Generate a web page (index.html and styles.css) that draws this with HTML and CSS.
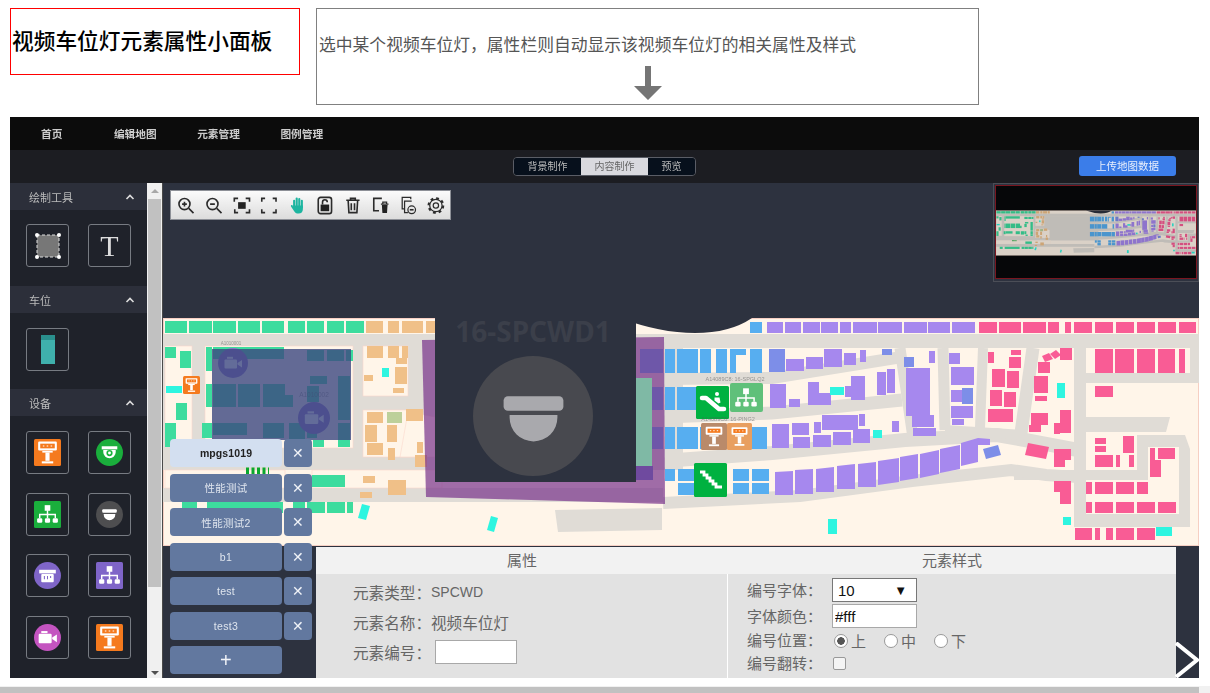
FILE: index.html
```
<!DOCTYPE html>
<html lang="zh-CN">
<head>
<meta charset="utf-8">
<title>视频车位灯元素属性小面板</title>
<link rel="stylesheet" href="styles.css">
</head>
<body>
<svg class="defs" width="0" height="0" aria-hidden="true">
  <defs>
    <symbol id="kiosk" viewBox="0 0 26 26">
      <rect x="4" y="2.5" width="18" height="8.5" rx="1" fill="#fff"/>
      <rect x="6" y="4.5" width="14" height="4.5" fill="#f57a1e"/>
      <path d="M8.5 6.7h1.5M12.2 6.7h1.5M16 6.7h1.5" stroke="#fff" stroke-width="1"/>
      <rect x="8" y="11.5" width="10" height="1.6" fill="#fff"/>
      <rect x="11" y="13" width="4" height="8" fill="#fff"/>
      <rect x="7.5" y="21.5" width="11" height="2" fill="#fff"/>
    </symbol>
    <symbol id="tree" viewBox="0 0 26 26">
      <rect x="10.3" y="4" width="5.4" height="5.4" fill="#fff"/>
      <path d="M13 9v4M5.5 16.5V13h15v3.5M13 13v3.5" stroke="#fff" stroke-width="1.4" fill="none"/>
      <rect x="3" y="16.5" width="5" height="4.5" rx="1.2" fill="#fff"/>
      <rect x="10.5" y="16.5" width="5" height="4.5" rx="1.2" fill="#fff"/>
      <rect x="18" y="16.5" width="5" height="4.5" rx="1.2" fill="#fff"/>
    </symbol>
    <symbol id="dome" viewBox="0 0 26 26">
      <rect x="6" y="8" width="14" height="3.4" rx="1" fill="currentColor"/>
      <path d="M7.4 12.4h11.2v.6a5.6 5.6 0 0 1-11.2 0z" fill="currentColor"/>
    </symbol>
    <symbol id="video" viewBox="0 0 26 26">
      <rect x="4.5" y="9.5" width="12.5" height="9" rx="1" fill="#fff"/>
      <rect x="7" y="6.8" width="6" height="2" fill="#fff"/>
      <path d="M17.5 13l4.5-3v7.500l-4.500-3z" fill="#fff"/>
    </symbol>
    <g id="mapart">
      <rect x="163" y="318" width="1036" height="228" fill="#fff5e9"/>
      <rect x="163.500" y="318.500" width="1035" height="227" fill="none" stroke="#f6cfc3"/>
      <g fill="#e0dcd6">
        <rect x="163" y="334" width="1036" height="14"/>
        <rect x="163" y="346" width="520" height="124"/>
        <rect x="163" y="488" width="500" height="14"/>
        <rect x="1190" y="348" width="9" height="35"/>
        <rect x="1085" y="373" width="114" height="10"/>
        <rect x="1074" y="348" width="12" height="179"/>
        <path d="M1086 417h84l-4 15h-80z"/>
        <path d="M1137 435h48l5 14v78h-116v-13h105v-67h-31v33h-134v-10h123z"/>
        <path d="M555 510l107-2v22l-104 2z"/>
      </g>
      <g fill="none" stroke="#e0dcd6">
        <path d="M663 379L772 378L902 357" stroke-width="12"/>
        <path d="M663 417L772 413L902 400" stroke-width="13"/>
        <path d="M663 461L772 453L905 440L997 435L1025 440L1078 450" stroke-width="14"/>
        <path d="M663 503L800 496L912 481L1011 470L1046 475L1078 477" stroke-width="12"/>
        <path d="M900 348L913 438" stroke-width="11"/>
        <path d="M943 348L945 430" stroke-width="11"/>
        <path d="M983 348L980 428" stroke-width="10"/>
        <path d="M1033 348L1021 433" stroke-width="13"/>
        <path d="M945 430L1025 435" stroke-width="10"/>
      </g>
      <g fill="#fff5e9" stroke="#fbd8cc" stroke-width=".6">
        <rect x="165" y="346" width="27" height="100"/>
        <rect x="205" y="346" width="148" height="102"/>
        <rect x="363" y="346" width="45" height="50"/>
        <rect x="363" y="410" width="60" height="47"/>
        <path d="M400 457l8-45 27 5v40z"/>
        <rect x="312" y="470" width="130" height="18"/>
        <rect x="165" y="470" width="120" height="18"/>
      </g>
      <g fill="#3ddc9e">
        <rect x="165" y="321" width="22" height="12"/><rect x="189" y="321" width="23" height="12"/><rect x="213" y="321" width="23" height="12"/><rect x="238" y="321" width="22" height="12"/><rect x="262" y="321" width="22" height="12"/><rect x="288" y="321" width="17" height="12"/><rect x="307" y="321" width="17" height="12"/><rect x="327" y="321" width="17" height="12"/><rect x="346" y="321" width="18" height="12"/>
        <rect x="165" y="347" width="11" height="11"/><rect x="180" y="351" width="11" height="17"/><rect x="176" y="403" width="11" height="17"/><rect x="165" y="423" width="11" height="24"/>
        <rect x="206" y="347" width="6" height="24"/><rect x="206" y="384" width="6" height="23"/><rect x="202" y="423" width="10" height="15"/>
        <rect x="213" y="347" width="71" height="12"/><rect x="307" y="350" width="17" height="11"/><rect x="327" y="350" width="17" height="11"/><rect x="346" y="350" width="7" height="11"/>
        <rect x="213" y="384" width="23" height="23"/><rect x="238" y="384" width="22" height="23"/><rect x="263" y="384" width="22" height="23"/><rect x="285" y="395" width="8" height="12"/>
        <rect x="310" y="376" width="17" height="8"/><rect x="338" y="376" width="12" height="44"/><rect x="307" y="386" width="12" height="16"/>
        <rect x="213" y="423" width="34" height="12"/><rect x="263" y="423" width="21" height="15"/><rect x="289" y="423" width="16" height="17"/><rect x="307" y="423" width="10" height="15"/><rect x="338" y="423" width="12" height="17"/>
        <rect x="313" y="440" width="11" height="7"/><rect x="338" y="440" width="12" height="7"/>
        <rect x="312" y="475" width="33" height="12"/>
        <rect x="182" y="502" width="15" height="11"/><rect x="207" y="502" width="76" height="11"/><rect x="293" y="502" width="12" height="11"/><rect x="307" y="502" width="18" height="11"/><rect x="327" y="502" width="18" height="11"/><rect x="347" y="502" width="6" height="11"/>
      </g>
      <path d="M246 471h23" stroke="#0aa82d" stroke-width="7" stroke-dasharray="3 2.500"/>
      <g fill="#f0c088">
        <rect x="366" y="321" width="17" height="12"/><rect x="388" y="321" width="11" height="12"/><rect x="402" y="321" width="21" height="12"/><rect x="426" y="321" width="10" height="12"/>
        <rect x="367" y="346" width="16" height="12"/><rect x="388" y="346" width="11" height="12"/><rect x="402" y="346" width="6" height="12"/><rect x="396" y="358" width="11" height="6"/><rect x="395" y="367" width="12" height="17"/><rect x="364" y="375" width="9" height="6"/><rect x="393" y="388" width="11" height="5"/>
        <rect x="367" y="412" width="16" height="11"/><rect x="406" y="409" width="17" height="12"/><rect x="365" y="425" width="12" height="17"/><rect x="387" y="425" width="10" height="17"/><rect x="367" y="443" width="16" height="12"/><rect x="388" y="448" width="7" height="12"/><rect x="417" y="442" width="6" height="11"/><rect x="415" y="455" width="12" height="12"/>
        <rect x="363" y="476" width="12" height="7"/><rect x="360" y="492" width="12" height="6"/><rect x="388" y="480" width="18" height="15"/>
      </g>
      <rect x="387" y="412" width="15" height="11" fill="#bdd09a"/>
      <g fill="#57aef0">
        <rect x="640" y="349" width="23" height="24"/><rect x="640" y="387" width="23" height="23"/><rect x="640" y="427" width="23" height="22"/>
        <rect x="665" y="349" width="10" height="24"/><rect x="677" y="349" width="21" height="24"/><rect x="700" y="349" width="11" height="24"/><rect x="716" y="349" width="11" height="24"/><path d="M730 349h16v6h-10v18h-6z"/><rect x="750" y="349" width="12" height="24"/>
        <rect x="750" y="322" width="12" height="11"/>
        <rect x="665" y="387" width="10" height="23"/><rect x="677" y="387" width="21" height="23"/><rect x="700" y="387" width="28" height="23"/><rect x="755" y="387" width="8" height="23"/>
        <rect x="665" y="427" width="10" height="22"/><rect x="677" y="427" width="21" height="22"/><rect x="700" y="427" width="50" height="22"/><rect x="752" y="427" width="15" height="22"/>
        <rect x="665" y="469" width="10" height="12"/><rect x="678" y="469" width="17" height="12"/><rect x="678" y="483" width="17" height="12"/>
        <rect x="733" y="469" width="16" height="12"/><rect x="752" y="469" width="17" height="12"/><rect x="733" y="483" width="16" height="11"/><rect x="752" y="483" width="17" height="11"/>
      </g>
      <g fill="#a688ee">
        <rect x="767" y="322" width="16" height="11"/><rect x="785" y="322" width="16" height="11"/><rect x="803" y="322" width="17" height="11"/><rect x="821" y="322" width="17" height="11"/><rect x="840" y="322" width="11" height="11"/><rect x="853" y="322" width="24" height="11"/><rect x="878" y="322" width="24" height="11"/><rect x="904" y="322" width="23" height="11"/><rect x="928" y="322" width="22" height="11"/><rect x="952" y="322" width="23" height="11"/>
        <rect x="786" y="359" width="18" height="12"/><rect x="806" y="357" width="17" height="12"/><rect x="824" y="349" width="18" height="18"/><rect x="844" y="353" width="12" height="12"/><rect x="860" y="350" width="6" height="12"/>
        <rect x="770" y="384" width="16" height="24"/><rect x="789" y="399" width="11" height="8"/><rect x="808" y="382" width="11" height="23"/><rect x="818" y="393" width="13" height="12"/><rect x="845" y="386" width="6" height="11"/><rect x="851" y="376" width="14" height="24"/><rect x="877" y="372" width="9" height="23"/><rect x="887" y="369" width="8" height="24"/>
        <rect x="772" y="424" width="17" height="24"/><rect x="792" y="423" width="17" height="12"/><rect x="793" y="437" width="17" height="11"/><rect x="814" y="422" width="7" height="11"/><rect x="813" y="435" width="18" height="12"/><rect x="822" y="415" width="36" height="15"/><rect x="859" y="414" width="6" height="12"/><rect x="833" y="432" width="18" height="13"/><rect x="853" y="429" width="17" height="14"/><rect x="892" y="421" width="7" height="11"/>
        <rect x="906" y="368" width="24" height="48"/><rect x="929" y="351" width="6" height="12"/><rect x="912" y="415" width="22" height="12"/><rect x="913" y="428" width="23" height="8"/>
        <rect x="949" y="353" width="11" height="11"/><rect x="951" y="367" width="23" height="18"/><rect x="951" y="390" width="11" height="12"/><rect x="951" y="406" width="22" height="12"/><rect x="952" y="419" width="12" height="6"/>
        <path d="M775 472l18-1v24h-18z"/><path d="M795 470l18-1v25h-18z"/><path d="M816 469l18-2v25h-18z"/><path d="M837 466l18-2v25h-18z"/><path d="M858 464l18-2v25h-18z"/><path d="M878 461l21-3v24l-21 3z"/><path d="M900 457l18-3v24l-18 3z"/><path d="M920 454l19-4v24l-19 4z"/><path d="M940 449l20-4v24l-20 4z"/><path d="M961 443l17-5v24l-17 4z"/><path d="M978 438l12 1v6h-12z"/>
      </g>
      <g fill="#7d8ee8">
        <rect x="769" y="349" width="16" height="23"/><rect x="882" y="349" width="10" height="6"/><rect x="904" y="357" width="10" height="10"/><rect x="962" y="388" width="11" height="16"/><path d="M983 449l15-4 3 10-15 4z"/>
      </g>
      <g fill="#f95c95">
        <rect x="979" y="322" width="18" height="11"/><rect x="999" y="322" width="22" height="11"/><rect x="1023" y="322" width="23" height="11"/><rect x="1048" y="322" width="11" height="11"/><rect x="1065" y="322" width="6" height="11"/><rect x="1074" y="322" width="18" height="11"/><rect x="1095" y="322" width="18" height="11"/><rect x="1116" y="322" width="18" height="11"/><rect x="1137" y="322" width="18" height="11"/><rect x="1158" y="322" width="18" height="11"/><rect x="1179" y="322" width="17" height="11"/>
        <rect x="988" y="352" width="6" height="11"/><rect x="1011" y="350" width="10" height="5"/><rect x="1009" y="357" width="12" height="11"/><rect x="992" y="369" width="13" height="18"/><rect x="1007" y="371" width="12" height="17"/><rect x="990" y="390" width="12" height="16"/><rect x="1004" y="392" width="12" height="15"/><rect x="988" y="409" width="25" height="13"/>
        <path d="M1042 356l7-3 4 6-8 3z"/><path d="M1050 354l6-4 5 5-6 4z"/><rect x="1060" y="348" width="12" height="12"/><rect x="1038" y="362" width="12" height="11"/><rect x="1034" y="376" width="14" height="17"/><rect x="1035" y="396" width="12" height="5"/><rect x="1031" y="413" width="11" height="12"/><rect x="1042" y="413" width="6" height="12"/><rect x="1029" y="425" width="12" height="7"/><rect x="1060" y="410" width="11" height="23"/><rect x="1054" y="423" width="6" height="11"/>
        <rect x="1095" y="349" width="18" height="24"/><rect x="1115" y="349" width="19" height="24"/><rect x="1137" y="349" width="18" height="24"/><rect x="1158" y="349" width="17" height="24"/><rect x="1179" y="349" width="6" height="24"/><rect x="1095" y="386" width="18" height="11"/>
        <rect x="1095" y="438" width="11" height="6"/><rect x="1095" y="446" width="11" height="6"/><rect x="1095" y="455" width="18" height="12"/><rect x="1116" y="455" width="4" height="12"/><rect x="1123" y="436" width="11" height="17"/><rect x="1129" y="455" width="5" height="12"/><rect x="1150" y="448" width="5" height="12"/><rect x="1158" y="448" width="17" height="11"/><rect x="1150" y="460" width="11" height="17"/>
        <path d="M1028 443l21 4-3 12-21-4z"/><rect x="1054" y="449" width="17" height="11"/><rect x="1054" y="460" width="11" height="7"/><rect x="1054" y="481" width="17" height="11"/><rect x="1060" y="492" width="11" height="12"/>
        <rect x="1086" y="482" width="6" height="12"/><rect x="1095" y="482" width="18" height="12"/><rect x="1116" y="482" width="18" height="12"/><rect x="1137" y="482" width="11" height="12"/>
        <rect x="1086" y="502" width="6" height="11"/><rect x="1095" y="502" width="18" height="11"/><rect x="1116" y="502" width="18" height="11"/><rect x="1137" y="502" width="18" height="11"/><rect x="1158" y="502" width="18" height="11"/>
        <rect x="1075" y="528" width="17" height="12"/><rect x="1095" y="528" width="5" height="12"/><rect x="1106" y="528" width="7" height="12"/><rect x="1116" y="528" width="18" height="12"/><rect x="1137" y="528" width="18" height="12"/>
      </g>
      <g fill="#2ef5e0">
        <rect x="166" y="386" width="16" height="7"/><rect x="382" y="368" width="7" height="9"/><path d="M362 504l8 2-4 14-8-2z"/><path d="M491 516l7 2-4 14-7-2z"/><rect x="830" y="387" width="14" height="8"/><rect x="873" y="430" width="9" height="8"/><rect x="1057" y="383" width="8" height="15"/><rect x="828" y="519" width="9" height="15"/><rect x="1063" y="517" width="8" height="8"/><rect x="1156" y="527" width="16" height="9"/>
      </g>
      <path d="M620 318Q660 333 695 333Q730 333 752 318Z" fill="#2d323f"/>
    </g>
  </defs>
</svg>

<header class="intro">
  <h1 class="intro-title">视频车位灯元素属性小面板</h1>
  <div class="intro-note">
    <p class="intro-text">选中某个视频车位灯，属性栏则自动显示该视频车位灯的相关属性及样式</p>
    <svg class="intro-arrow" width="30" height="36" viewBox="0 0 30 36"><path d="M12 0h6v20h11L15 34 1 20h11z" fill="#757575"/></svg>
  </div>
</header>

<section class="app">
  <nav class="nav soft">
    <a class="nav-link nav-home">首页</a>
    <a class="nav-link">编辑地图</a>
    <a class="nav-link">元素管理</a>
    <a class="nav-link">图例管理</a>
  </nav>
  <div class="subbar soft">
    <div></div>
    <div class="tabs">
      <span class="tab tab-a">背景制作</span>
      <span class="tab tab-b">内容制作</span>
      <span class="tab tab-c">预览</span>
    </div>
    <div class="subbar-end"><button class="upload">上传地图数据</button></div>
  </div>
  <div class="main">
    <aside class="sidebar soft">
      <div class="side-head"><span>绘制工具</span><svg class="chev" width="10" height="6" viewBox="0 0 10 6"><path d="M1.500 5L5 1.500 8.500 5" fill="none" stroke="#ddd" stroke-width="1.600"/></svg></div>
      <div class="tiles tiles-a">
        <div class="tile"><svg width="30" height="30" viewBox="0 0 30 30"><rect x="4" y="4" width="22" height="22" fill="#777" stroke="#ddd" stroke-dasharray="3 2"/><circle cx="4" cy="4" r="2" fill="#fff"/><circle cx="26" cy="4" r="2" fill="#fff"/><circle cx="4" cy="26" r="2" fill="#fff"/><circle cx="26" cy="26" r="2" fill="#fff"/></svg></div>
        <div class="tile tile-t">T</div>
      </div>
      <div class="side-head"><span>车位</span><svg class="chev" width="10" height="6" viewBox="0 0 10 6"><path d="M1.500 5L5 1.500 8.500 5" fill="none" stroke="#ddd" stroke-width="1.600"/></svg></div>
      <div class="tiles tiles-b">
        <div class="tile"><svg width="14" height="29" viewBox="0 0 14 29"><rect width="14" height="29" fill="#3fb0ac"/><rect width="14" height="5" fill="#2a8f8d"/></svg></div>
      </div>
      <div class="side-head"><span>设备</span><svg class="chev" width="10" height="6" viewBox="0 0 10 6"><path d="M1.500 5L5 1.500 8.500 5" fill="none" stroke="#ddd" stroke-width="1.600"/></svg></div>
      <div class="tiles tiles-c">
        <div class="tile"><svg class="badge badge-orange" viewBox="0 0 26 26"><use href="#kiosk"/></svg></div>
        <div class="tile"><svg class="badge badge-round badge-green dome-white" viewBox="0 0 26 26"><rect x="5.500" y="7" width="15" height="3" fill="#fff"/><path d="M7 10.500h12v2a6 6 0 0 1-12 0z" fill="#fff"/><circle cx="13" cy="13.500" r="3" fill="#19b43c"/><circle cx="13" cy="13.500" r="1.400" fill="#fff"/></svg></div>
        <div class="tile"><svg class="badge badge-green" viewBox="0 0 26 26"><use href="#tree"/></svg></div>
        <div class="tile"><svg class="badge badge-round badge-gray dome-white" viewBox="0 0 26 26"><use href="#dome"/></svg></div>
        <div class="tile"><svg class="badge badge-round badge-purple" viewBox="0 0 26 26"><rect x="5" y="7.500" width="16" height="3.500" fill="#fff"/><rect x="7" y="11.500" width="12" height="8" rx="1" fill="#fff"/><path d="M10 13.500v3M13 13.500v3M16 13.500v2" stroke="#7f65c8"/></svg></div>
        <div class="tile"><svg class="badge badge-purple" viewBox="0 0 26 26"><use href="#tree"/></svg></div>
        <div class="tile"><svg class="badge badge-round badge-magenta" viewBox="0 0 26 26"><use href="#video"/></svg></div>
        <div class="tile"><svg class="badge badge-orange" viewBox="0 0 26 26"><use href="#kiosk"/></svg></div>
      </div>
    </aside>
    <div class="vscroll">
      <span class="vscroll-up"></span>
      <span class="vscroll-thumb"></span>
      <span class="vscroll-down"></span>
    </div>
    <div class="canvas">
      <svg class="map soft" viewBox="163 318 1036 228" width="1036" height="228">
        <use href="#mapart"/>
        <g class="map-faint"><text x="231" y="345" font-size="4.500">A1010001</text><text x="314" y="397" font-size="6.500">A1010002</text></g>
        <rect x="183" y="376" width="17" height="18" rx="1.500" fill="#f57a1e"/>
        <use href="#kiosk" x="183" y="376" width="17" height="18"/>
        <circle cx="233" cy="363" r="15" fill="#8b6fc8"/><use href="#video" x="220" y="350" width="26" height="26"/>
        <circle cx="314" cy="418" r="16" fill="#8b6fc8"/><use href="#video" x="300" y="404" width="28" height="28"/>
        <rect x="212" y="349" width="139" height="91" fill="#3c4780" fill-opacity=".8"/>
        <path d="M422 340L664 337L665 504L426 497Z" fill="#78328a" fill-opacity=".7"/>
        <rect x="635" y="378" width="17" height="88" fill="#7fb9a5"/>
        <rect x="636" y="466" width="17" height="14" fill="#6f4a9f"/>
        <rect x="730" y="383" width="33" height="29" rx="2" fill="#5fc07a"/>
        <use href="#tree" x="732" y="384" width="28" height="28"/>
        <rect x="696" y="386" width="33" height="33" rx="1.500" fill="#00b140"/>
        <path d="M702 398h4l13 11h5" fill="none" stroke="#fff" stroke-width="4.500" stroke-linecap="round" stroke-linejoin="round"/><circle cx="717" cy="394" r="2" fill="#fff"/><path d="M714.500 397.500h5l1 5-2 1-4-3z" fill="#fff"/>
        <rect x="701" y="423" width="26" height="27" rx="1.500" fill="#b98a6a"/>
        <rect x="727" y="423" width="25" height="27" rx="1.500" fill="#e89f60"/>
        <use href="#kiosk" x="702" y="424" width="24" height="25"/>
        <use href="#kiosk" x="728" y="424" width="23" height="25"/>
        <rect x="694" y="463" width="33" height="34" rx="1.500" fill="#00b140"/>
        <path d="M700 472h4v3h3v3h3v3h3v3h3v3h6" fill="none" stroke="#fff" stroke-width="2.800"/>
        <g class="map-faint"><text x="735" y="381" font-size="5.500">A14089C8: 16-SPGLQ2</text><text x="728" y="421" font-size="5.500">A14089C8: 16-PING2</text></g>
      </svg>

      <div class="toolbar soft">
        <svg class="tool" viewBox="0 0 20 20"><circle cx="8.500" cy="8.500" r="5.800"/><path d="M13 13l5 5M6 8.500h5M8.500 6v5"/></svg>
        <svg class="tool" viewBox="0 0 20 20"><circle cx="8.500" cy="8.500" r="5.800"/><path d="M13 13l5 5M6 8.500h5"/></svg>
        <svg class="tool" viewBox="0 0 20 20"><path d="M2 6V2.500h4M14 2.500h4V6M18 14v3.500h-4M6 17.500H2.500V14"/><rect class="fill" x="6" y="6.500" width="8" height="7"/></svg>
        <svg class="tool" viewBox="0 0 20 20"><path d="M2.500 6V2.500H6M14 2.500h3.500V6M17.500 14v3.500H14M6 17.500H2.500V14"/></svg>
        <svg class="tool" viewBox="0 0 20 20"><g class="hand"><rect x="6" y="4" width="2.200" height="9" rx="1.100"/><rect x="8.700" y="1.500" width="2.200" height="11" rx="1.100"/><rect x="11.400" y="2" width="2.200" height="11" rx="1.100"/><rect x="14.100" y="4" width="2.200" height="9" rx="1.100"/><path d="M6 10h10.300v4c0 3-1.800 4.500-4.500 4.500-2.500 0-3.800-1-5-3l-3-4.500c-.6-1 .7-2 1.600-1.200L6 11.500z"/></g></svg>
        <svg class="tool" viewBox="0 0 20 20"><rect x="3" y="1.500" width="14" height="17" rx="2.500"/><rect class="fill" x="5.500" y="9" width="9" height="7"/><path d="M7.500 9V6.500a2.500 2.500 0 0 1 5 0"/></svg>
        <svg class="tool" viewBox="0 0 20 20"><path d="M3 4.500h14M7.500 4.500V2.500h5v2M5 4.500l.8 13h8.400l.8-13M8.300 7.500v7.500M11.700 7.500v7.500"/></svg>
        <svg class="tool" viewBox="0 0 20 20"><path d="M11 2.500H2.500v13H8"/><path class="fine" d="M10 8.500h8M12 8.500v-2h4v2"/><path class="fill" d="M11 9.500h6l-.6 8.500h-4.800z"/></svg>
        <svg class="tool" viewBox="0 0 20 20"><path class="fine" d="M13 3.500V1.500H4v12h2"/><path class="fine" d="M14 5.500H6.500v12H10"/><circle class="fine" cx="14" cy="14.500" r="4"/><path d="M12 14.500h4"/></svg>
        <svg class="tool" viewBox="0 0 20 20"><circle cx="10" cy="10" r="6.500" class="fine"/><circle cx="10" cy="10" r="7.700" stroke-dasharray="3 3.050" stroke-width="2.200"/><circle cx="10" cy="10" r="2.800" class="fine"/></svg>
      </div>

      <div class="minimap">
        <div class="minimap-frame">
          <svg class="minimap-art" viewBox="163 318 1036 228" width="204" height="46"><use href="#mapart"/></svg>
        </div>
      </div>

      <div class="preview">
        <div class="preview-code">16-SPCWD1</div>
        <div class="preview-disc"><svg class="preview-dome" viewBox="0 0 26 26"><use href="#dome"/></svg></div>
      </div>

      <div class="layers soft">
        <button class="layer layer-on">mpgs1019</button><button class="layer-x">✕</button>
        <button class="layer">性能测试</button><button class="layer-x">✕</button>
        <button class="layer">性能测试2</button><button class="layer-x">✕</button>
        <button class="layer">b1</button><button class="layer-x">✕</button>
        <button class="layer">test</button><button class="layer-x">✕</button>
        <button class="layer">test3</button><button class="layer-x">✕</button>
        <button class="layer layer-add">+</button>
      </div>

      <div class="panel">
        <div class="panel-col panel-left">
          <h2 class="panel-head">属性</h2>
          <div class="panel-body body-left">
            <div class="row">元素类型：<span class="latin">SPCWD</span></div>
            <div class="row">元素名称：视频车位灯</div>
            <div class="row">元素编号：<input class="field field-code" type="text"></div>
          </div>
        </div>
        <div class="panel-col panel-right">
          <h2 class="panel-head">元素样式</h2>
          <div class="panel-body body-right">
            <div class="row-s"><span class="lab">编号字体：</span><span class="select"><span>10</span><span class="select-arrow">▼</span></span></div>
            <div class="row-s"><span class="lab">字体颜色：</span><input class="field field-color" type="text" value="#fff"></div>
            <div class="row-s row-radio"><span class="lab">编号位置：</span>
              <label class="opt"><input class="radio" type="radio" name="pos" checked>上</label>
              <label class="opt"><input class="radio" type="radio" name="pos">中</label>
              <label class="opt"><input class="radio" type="radio" name="pos">下</label>
            </div>
            <div class="row-s row-radio"><span class="lab">编号翻转：</span><input class="check" type="checkbox"></div>
          </div>
        </div>
      </div>

      <svg class="next" width="24" height="36" viewBox="0 0 24 36"><path d="M1 1L22 18 1 35" fill="none" stroke="#fff" stroke-width="4"/></svg>
    </div>
  </div>
</section>
<div class="hscroll"><span class="hscroll-thumb"></span></div>
</body>
</html>
```
FILE: styles.css
```
* { box-sizing: border-box; }
html, body { margin: 0; height: 693px; overflow: hidden; background: #fff; }
body { font-family: "Liberation Sans", "Noto Sans CJK SC", sans-serif; position: relative; }
.defs { position: absolute; }
.soft { filter: blur(.35px); }

.intro { display: flex; height: 117px; padding: 8px 0 0 10px; gap: 16px; align-items: flex-start; }
.intro-title { width: 290px; height: 67px; margin: 0; border: 1px solid #f00; padding-left: 1px; font-size: 21.700px; line-height: 65px; font-weight: 500; color: #000; white-space: nowrap; }
.intro-note { width: 663px; height: 97px; border: 1px solid #808080; padding: 24px 0 0 2px; display: flex; flex-direction: column; }
.intro-text { margin: 0; font-size: 16.800px; line-height: 26px; color: #555; white-space: nowrap; }
.intro-arrow { margin: 7px 0 0 314px; display: block; }

.app { margin-left: 10px; width: 1189px; height: 561px; display: flex; flex-direction: column; background: #2d323f; }
.nav { height: 33px; background: #0c0c0c; display: flex; align-items: center; padding-left: 31px; gap: 40.500px; }
.nav-link { font-size: 10.700px; font-weight: 700; color: #ccc; }
.nav-home { margin-right: 11px; }
.subbar { height: 33px; background: #1c1d22; display: grid; grid-template-columns: 1fr auto 1fr; align-items: center; }
.subbar-end { display: flex; justify-content: flex-end; padding-right: 23px; }
.tabs { display: flex; height: 19px; border: 1px solid #5a5d66; border-radius: 4px; overflow: hidden; margin-top: -1px; }
.tab { font-size: 10px; line-height: 17px; text-align: center; color: #bbb; background: #07101c; }
.tab-a { width: 67px; }
.tab-b { width: 67px; background: #d9d9de; color: #666; }
.tab-c { width: 47px; }
.upload { width: 97px; height: 20px; margin-top: -2px; padding: 0; border: 0; border-radius: 3px; background: #3b7de9; color: #e8effc; font: 10.500px "Liberation Sans", "Noto Sans CJK SC", sans-serif; }

.main { flex: 1; display: flex; min-height: 0; }
.sidebar { width: 137px; background: #1f222a; }
.side-head { height: 27px; background: #2c2f3a; display: flex; align-items: center; justify-content: space-between; padding: 0 12px 0 19px; font-size: 11px; color: #bbb; }
.tiles { display: grid; grid-template-columns: 43px 43px; column-gap: 19px; padding-left: 16px; justify-items: center; align-content: start; }
.tiles-a { height: 76px; padding-top: 14px; }
.tiles-b { height: 76px; padding-top: 15px; }
.tiles-c { row-gap: 18.500px; padding-top: 15px; }
.tile { width: 43px; height: 43px; border: 1px solid #777b82; border-radius: 3px; display: flex; align-items: center; justify-content: center; }
.tile-t { font: 30px/1 "Liberation Serif", serif; color: #ddd; }
.badge { width: 27px; height: 27px; border-radius: 1.500px; display: block; }
.badge-round { border-radius: 50%; }
.badge-orange { background: #f57a1e; }
.badge-green { background: #1aae3c; }
.badge-gray { background: #4e4e50; }
.badge-purple { background: #7f65c8; }
.badge-magenta { background: #c454c0; }
.dome-white { color: #fff; }

.vscroll { width: 16px; background: #f0f0f0; border-right: 1px solid #4a4a4a; position: relative; display: flex; flex-direction: column; align-items: center; }
.vscroll-up { width: 0; height: 0; margin-top: 6px; border: 4px solid transparent; border-top: 0; border-bottom: 4px solid #a8a8a8; }
.vscroll-thumb { width: 13px; height: 388px; margin-top: 6px; background: #c1c1c1; }
.vscroll-down { width: 0; height: 0; margin-top: auto; margin-bottom: 3px; border: 4px solid transparent; border-bottom: 0; border-top: 4px solid #505050; }

.canvas { flex: 1; position: relative; overflow: hidden; background: #2d323f; }
.map { position: absolute; left: 0; top: 135px; display: block; }
.map-faint { fill: #555; fill-opacity: .55; text-anchor: middle; font-family: "Liberation Sans", sans-serif; }

.toolbar { position: absolute; left: 7px; top: 7px; width: 281px; height: 30px; padding-left: 1px; display: flex; align-items: center; background: linear-gradient(#fbfbfb, #dcdcdc); border: 1px solid #8d9097; }
.tool { flex: 0 0 27.800px; height: 19px; fill: none; stroke: #2b2b2b; stroke-width: 1.700; }
.tool .fill { fill: #222; stroke: none; }
.tool .fine { stroke-width: 1.300; }
.tool .hand { fill: #1db5a0; stroke: none; }

.minimap { position: absolute; right: 0; top: 0; width: 206px; height: 99px; border: 1px solid #4b4e57; padding: 1px; }
.minimap-frame { width: 100%; height: 94px; background: #060709; border: 1px solid #7a1620; padding-top: 24px; overflow: hidden; }
.minimap-art { display: block; opacity: .85; filter: blur(.5px); }

.preview { position: absolute; left: 272px; top: 127px; width: 201px; height: 172px; padding-right: 5px; background: #2d323f; display: flex; flex-direction: column; align-items: center; }
.preview-code { margin-top: 6px; font: 700 28px/30px "Noto Sans", sans-serif; color: #3b3f4a; white-space: nowrap; }
.preview-disc { width: 120px; height: 120px; margin-top: 10px; border-radius: 50%; background: #48494f; display: flex; align-items: center; justify-content: center; color: #a9a9ad; }
.preview-dome { width: 111px; height: 111px; display: block; margin-top: 2px; }

.layers { position: absolute; left: 7px; top: 256px; display: grid; grid-template-columns: 112px 28px; column-gap: 2px; row-gap: 6.500px; grid-auto-rows: 28px; }
.layer, .layer-x { border: 0; padding: 0; border-radius: 4px; background: #62789f; color: #dfe5ee; font: 10.500px "Liberation Sans", "Noto Sans CJK SC", sans-serif; letter-spacing: .3px; }
.layer-on { background: #d3dff0; color: #222; font-weight: 700; letter-spacing: .1px; }
.layer-x { font-size: 14px; color: #f0f3f8; letter-spacing: 0; }
.layer-add { font-size: 20px; color: #f0f3f8; font-weight: 300; }

.panel { position: absolute; left: 153px; bottom: 0; width: 860px; height: 131px; display: flex; color: #666; }
.panel-col { display: flex; flex-direction: column; }
.panel-left { width: 412px; }
.panel-right { flex: 1; }
.panel-head { margin: 0; height: 27px; background: #f2f2f2; text-align: center; font-size: 15px; font-weight: 400; line-height: 28px; color: #666; }
.panel-body { flex: 1; background: #e2e2e2; }
.body-left { padding: 3px 0 0 37px; border-right: 1px solid #fff; }
.row { height: 30px; display: flex; align-items: center; font-size: 15.600px; white-space: pre; }
.latin { font-size: 14px; }
.body-right { padding: 3px 0 0 19px; font-size: 15px; }
.row-s { display: flex; align-items: center; height: 26px; }
.row-radio { height: 23px; }
.lab { width: 85px; flex: none; white-space: nowrap; position: relative; top: -1px; }
.field { height: 24px; background: #fff; border: 1px solid #a8a8a8; padding: 0 2px; font: 15px "Liberation Sans", sans-serif; color: #111; }
.field-code { width: 82px; margin-left: 4px; }
.field-color { width: 85px; }
.select { width: 85px; height: 24px; background: #fff; border: 1px solid #777; display: flex; align-items: center; justify-content: space-between; padding: 0 9px 0 5px; font: 15px "Liberation Sans", sans-serif; color: #111; }
.select-arrow { font-size: 13px; }
.opt { display: flex; align-items: center; width: 50px; color: #666; }
.radio { appearance: none; margin: 0 3px 0 2px; width: 14px; height: 14px; border: 1px solid #999; border-radius: 50%; background: #fff; }
.radio:checked { background: radial-gradient(circle, #555 0 3.500px, #fff 4px); }
.check { appearance: none; margin: 0 0 0 1px; width: 13px; height: 13px; border: 1px solid #999; border-radius: 2px; background: #f4f4f4; }

.next { position: absolute; right: 0; bottom: 0; }

.hscroll { height: 7px; margin-top: 8px; padding-top: 1px; background: #f1f1f1; }
.hscroll-thumb { display: block; width: 1199px; height: 6px; background: #c1c1c1; }
```
